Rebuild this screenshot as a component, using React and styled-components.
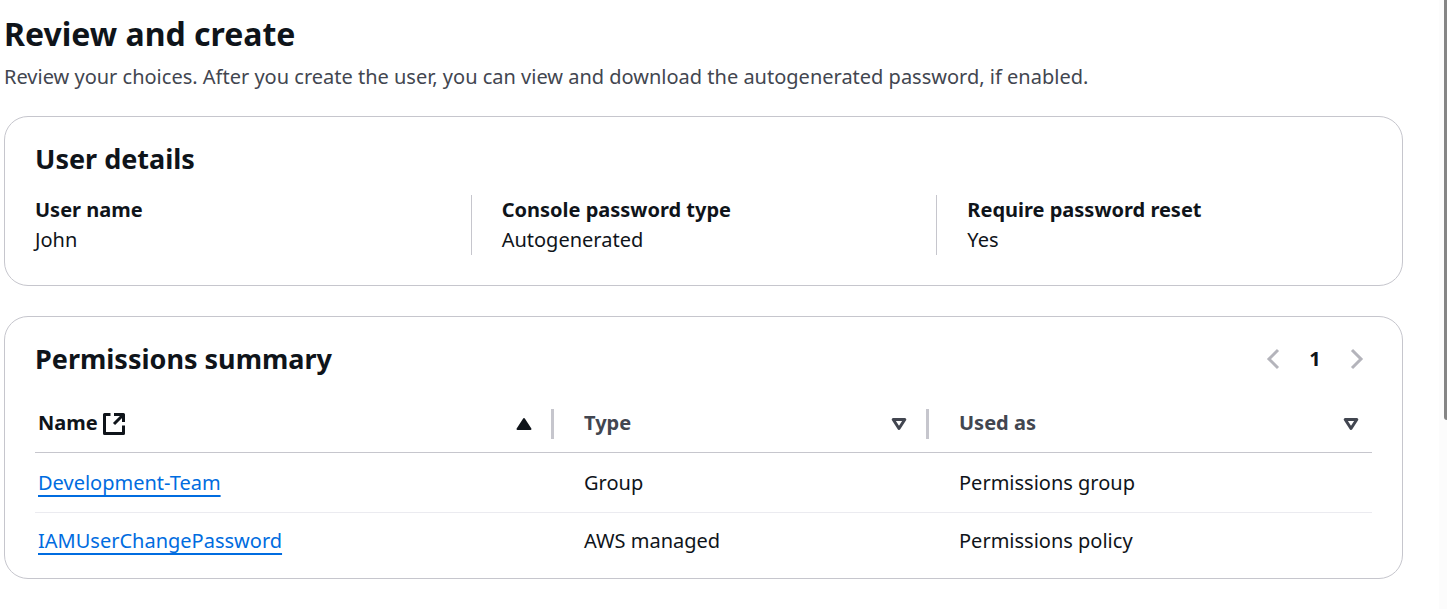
import React from "react";
import styled, { createGlobalStyle } from "styled-components";

const GlobalStyle = createGlobalStyle`
  *, *::before, *::after { box-sizing: border-box; }
  body {
    margin: 0;
    background: #fff;
    color: #0f141a;
    font-family: "Noto Sans", "Open Sans", sans-serif;
    font-size: 20px;
    line-height: 30px;
  }
  h1, h2, p, dl, dd { margin: 0; }
`;

const Page = styled.div`
  display: flex;
  min-height: 100vh;
`;

const Content = styled.main`
  flex: 1;
  min-width: 0;
  padding: 12px 36px 30px 4px;
`;

const Rail = styled.div`
  display: flex;
  justify-content: flex-end;
  width: 8px;
  background: #fcfcfc;
`;

const Thumb = styled.div`
  width: 3px;
  height: 69vh;
  border-bottom-left-radius: 3px;
  background: #858585;
`;

const PageTitle = styled.h1`
  font-size: 32px;
  line-height: 44px;
  font-weight: 700;
`;

const Description = styled.p`
  margin: 6px 0 24px;
  color: #424650;
`;

const Card = styled.section`
  padding: 24px 30px ${(p) => p.$bottom}px;
  border: 1px solid #c6c6cd;
  border-radius: 24px;
  & + & { margin-top: 30px; }
`;

const CardHeader = styled.header`
  display: flex;
  align-items: center;
  justify-content: space-between;
  margin-bottom: 18px;
`;

const CardTitle = styled.h2`
  font-size: 27px;
  line-height: 36px;
  font-weight: 700;
`;

const Details = styled.dl`
  display: grid;
  grid-template-columns: repeat(3, 1fr);
  gap: 30px;
  margin-left: -30px;
`;

const Detail = styled.div`
  padding-left: 30px;
  & + & { border-left: 1px solid #c6c6cd; }
  dt { font-weight: 700; }
`;

const Pagination = styled.nav`
  display: flex;
  align-items: center;
  gap: 12px;
`;

const PageButton = styled.button`
  display: flex;
  align-items: center;
  justify-content: center;
  width: 30px;
  height: 30px;
  padding: 0;
  border: 0;
  background: none;
  color: ${(p) => (p.disabled ? "#b4b4bb" : "#0f141a")};
  font: inherit;
  font-weight: 700;
`;

const Table = styled.table`
  width: 100%;
  table-layout: fixed;
  border-collapse: separate;
  border-spacing: 0;
`;

const Column = styled.col`
  width: ${(p) => p.$width};
`;

const HeadCell = styled.th`
  padding: 14px 0 13px;
  border-bottom: 1px solid #c6c6cd;
  text-align: left;
`;

const SortButton = styled.button`
  display: flex;
  align-items: center;
  justify-content: space-between;
  width: 100%;
  height: 30px;
  padding: 0 ${(p) => (p.$last ? 13 : 19)}px 0 ${(p) => (p.$first ? 3 : 30)}px;
  border: 0;
  border-right: ${(p) => (p.$last ? "0" : "3px solid #c6c6cd")};
  background: none;
  color: ${(p) => (p.$active ? "#0f141a" : "#424650")};
  font: inherit;
  font-weight: 700;
`;

const Label = styled.span`
  display: flex;
  align-items: center;
  gap: 4px;
  padding-bottom: 2px;
`;

const Row = styled.tr`
  & + & td { border-top: 1px solid #ebebf0; }
`;

const Cell = styled.td`
  padding: ${(p) => (p.$top ? 15 : 13)}px 0 ${(p) => (p.$top ? 14 : 0)}px ${(p) => (p.$first ? 3 : 30)}px;
`;

const Link = styled.a`
  color: #006ce0;
  text-decoration: underline;
  text-decoration-thickness: 2px;
  text-underline-offset: 5px;
  text-decoration-skip-ink: none;
`;

const Chevron = ({ right }) => (
  <svg width="14" height="22" viewBox="0 0 14 22" fill="none" stroke="currentColor" strokeWidth="3" aria-hidden="true">
    <path d={right ? "M2 2 L11 11 L2 20" : "M12 2 L3 11 L12 20"} />
  </svg>
);

const SortIcon = ({ active }) => (
  <svg width="16" height="14" viewBox="0 0 16 14" stroke="currentColor" strokeLinejoin="round" aria-hidden="true">
    {active ? (
      <path d="M8 2 L14.5 12 H1.5 Z" fill="currentColor" strokeWidth="2" />
    ) : (
      <path d="M2.2 2.5 H13.8 L8 11.5 Z" fill="none" strokeWidth="3" />
    )}
  </svg>
);

const ExternalIcon = () => (
  <svg width="24" height="24" viewBox="0 0 24 24" fill="none" stroke="currentColor" strokeWidth="3" aria-hidden="true">
    <path d="M8.5 3.5 H2.5 V22.5 H21.5 V14.5" strokeLinejoin="round" />
    <path d="M12 3.5 H21.5 V11" strokeLinejoin="round" />
    <path d="M21 4 L12 13" />
  </svg>
);

const details = [
  ["User name", "John"],
  ["Console password type", "Autogenerated"],
  ["Require password reset", "Yes"],
];

const permissions = [
  ["Development-Team", "Group", "Permissions group"],
  ["IAMUserChangePassword", "AWS managed", "Permissions policy"],
];

export default function App() {
  return (
    <Page>
      <GlobalStyle />
      <Content>
        <PageTitle>Review and create</PageTitle>
        <Description>
          Review your choices. After you create the user, you can view and download the autogenerated password, if
          enabled.
        </Description>

        <Card $bottom={30}>
          <CardHeader>
            <CardTitle>User details</CardTitle>
          </CardHeader>
          <Details>
            {details.map(([term, value]) => (
              <Detail key={term}>
                <dt>{term}</dt>
                <dd>{value}</dd>
              </Detail>
            ))}
          </Details>
        </Card>

        <Card $bottom={22}>
          <CardHeader>
            <CardTitle>Permissions summary</CardTitle>
            <Pagination aria-label="Pages">
              <PageButton disabled aria-label="Previous page"><Chevron /></PageButton>
              <PageButton aria-current="page">1</PageButton>
              <PageButton disabled aria-label="Next page"><Chevron right /></PageButton>
            </Pagination>
          </CardHeader>
          <Table>
            <colgroup>
              <Column $width="519px" />
              <Column $width="375px" />
              <Column $width="auto" />
            </colgroup>
            <thead>
              <tr>
                <HeadCell aria-sort="ascending">
                  <SortButton $first $active>
                    <Label>Name <ExternalIcon /></Label>
                    <SortIcon active />
                  </SortButton>
                </HeadCell>
                <HeadCell>
                  <SortButton><Label>Type</Label><SortIcon /></SortButton>
                </HeadCell>
                <HeadCell>
                  <SortButton $last><Label>Used as</Label><SortIcon /></SortButton>
                </HeadCell>
              </tr>
            </thead>
            <tbody>
              {permissions.map(([name, type, usedAs], i) => (
                <Row key={name}>
                  <Cell $first $top={i === 0}><Link href="#">{name}</Link></Cell>
                  <Cell $top={i === 0}>{type}</Cell>
                  <Cell $top={i === 0}>{usedAs}</Cell>
                </Row>
              ))}
            </tbody>
          </Table>
        </Card>
      </Content>
      <Rail aria-hidden="true"><Thumb /></Rail>
    </Page>
  );
}
